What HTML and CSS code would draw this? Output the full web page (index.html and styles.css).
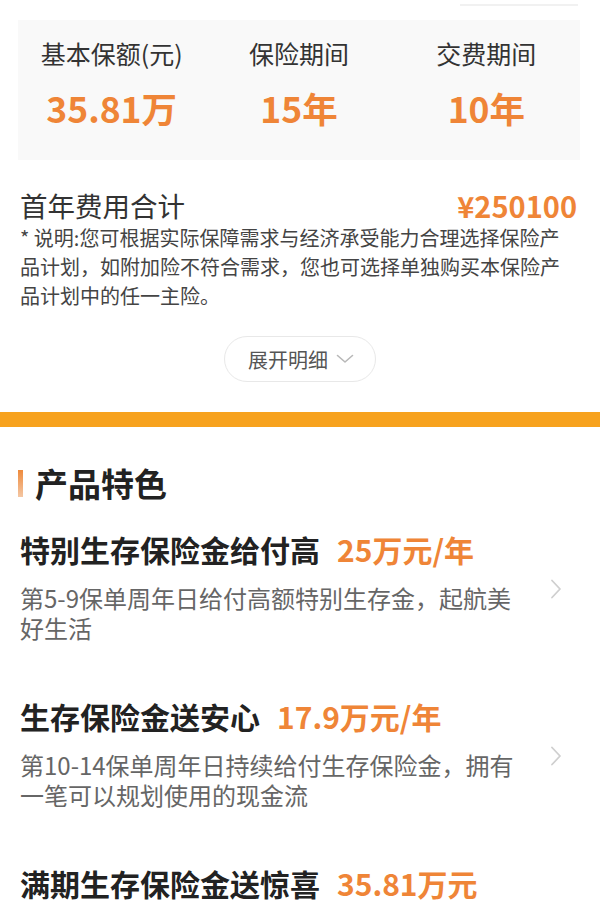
FILE: index.html
```html
<!DOCTYPE html>
<html lang="zh-CN">
<head>
<meta charset="utf-8">
<title>产品详情</title>
<link rel="stylesheet" href="styles.css">
</head>
<body>
<div class="page">
  <div class="top-line"></div>
  <div class="summary">
    <div class="cell">
      <div class="label">基本保额(元)</div>
      <div class="value">35.81万</div>
    </div>
    <div class="cell">
      <div class="label">保险期间</div>
      <div class="value">15年</div>
    </div>
    <div class="cell">
      <div class="label">交费期间</div>
      <div class="value">10年</div>
    </div>
  </div>

  <div class="fee-row">
    <span class="fee-title">首年费用合计</span>
    <span class="fee-amount">¥250100</span>
  </div>
  <p class="note">* 说明:您可根据实际保障需求与经济承受能力合理选择保险产品计划，如附加险不符合需求，您也可选择单独购买本保险产品计划中的任一主险。</p>

  <div class="expand-wrap">
    <div class="expand-btn">
      <span>展开明细</span>
      <svg class="expand-icon" width="18" height="10" viewBox="0 0 18 10"><path d="M1.5 1.5 L9 8 L16.5 1.5" fill="none" stroke="#b8b8b8" stroke-width="1.6" stroke-linecap="round" stroke-linejoin="round"/></svg>
    </div>
  </div>

  <div class="divider"></div>

  <section class="features">
    <h2 class="section-title"><span class="accent"></span>产品特色</h2>

    <div class="item">
      <div class="item-title">特别生存保险金给付高<span class="hl">25万元/年</span></div>
      <div class="item-body">
        <p class="item-desc">第5-9保单周年日给付高额特别生存金，起航美好生活</p>
        <svg class="chev" width="12" height="20" viewBox="0 0 12 20"><path d="M2 1.5 L10 10 L2 18.5" fill="none" stroke="#cfcfcf" stroke-width="1.8" stroke-linecap="round" stroke-linejoin="round"/></svg>
      </div>
    </div>

    <div class="item">
      <div class="item-title">生存保险金送安心<span class="hl">17.9万元/年</span></div>
      <div class="item-body">
        <p class="item-desc">第10-14保单周年日持续给付生存保险金，拥有一笔可以规划使用的现金流</p>
        <svg class="chev" width="12" height="20" viewBox="0 0 12 20"><path d="M2 1.5 L10 10 L2 18.5" fill="none" stroke="#cfcfcf" stroke-width="1.8" stroke-linecap="round" stroke-linejoin="round"/></svg>
      </div>
    </div>

    <div class="item">
      <div class="item-title">满期生存保险金送惊喜<span class="hl">35.81万元</span></div>
    </div>
  </section>
</div>
</body>
</html>
```

FILE: styles.css
```css
* { box-sizing: border-box; }
html, body { margin: 0; padding: 0; background: #fff; }
body {
  font-family: "Noto Sans CJK SC", "Noto Sans", sans-serif;
  color: #333;
  width: 600px;
  overflow: hidden;
}
.page { width: 600px; }

.top-line {
  height: 2px;
  margin: 4px 22px 0 460px;
  background: #f1f1f1;
}

.summary {
  margin: 14px 20px 0 18px;
  background: #f9f9f9;
  display: grid;
  grid-template-columns: 1fr 1fr 1fr;
  padding: 16px 0 31px;
}
.cell { text-align: center; }
.label {
  font-size: 25px;
  line-height: 35px;
  color: #333;
}
.value {
  margin-top: 16px;
  font-size: 35.5px;
  line-height: 42px;
  font-weight: 700;
  color: #ef8537;
}

.fee-row {
  margin: 27px 23px 0 20px;
  display: flex;
  justify-content: space-between;
  align-items: center;
  height: 36px;
}
.fee-title {
  font-size: 27.5px;
  line-height: 36px;
  color: #333;
}
.fee-amount {
  font-size: 29px;
  line-height: 36px;
  font-weight: 700;
  color: #ef8537;
}
.note {
  margin: 0;
  padding-left: 20px;
  width: 572px;
  font-size: 20px;
  line-height: 29px;
  color: #444;
}

.expand-wrap {
  display: flex;
  justify-content: center;
  margin-top: 26px;
}
.expand-btn {
  height: 46px;
  width: 152px;
  border: 1px solid #e8e8e8;
  border-radius: 23px;
  display: flex;
  align-items: center;
  justify-content: center;
  gap: 8px;
  font-size: 20px;
  color: #555;
  padding-left: 2px;
}

.divider {
  margin-top: 30px;
  height: 15px;
  background: #f7a21e;
}

.features { padding: 0 20px; }
.section-title {
  margin: 36px 0 0;
  display: flex;
  align-items: center;
  font-size: 33px;
  line-height: 40px;
  font-weight: 700;
  color: #222;
}
.accent {
  width: 5px;
  height: 27px;
  margin-left: -2px;
  margin-right: 12px;
  background: linear-gradient(#ee8a3c, #f4c7a4);
}

.item { margin-top: 26px; }
.item + .item { margin-top: 53px; }
.item-title {
  font-size: 30px;
  line-height: 40px;
  font-weight: 700;
  color: #222;
  white-space: nowrap;
}
.hl {
  margin-left: 17px;
  color: #ef8537;
}
.item-body {
  margin-top: 14px;
  display: flex;
  justify-content: space-between;
  align-items: flex-start;
}
.item-desc {
  margin: 0;
  width: 500px;
  font-size: 24px;
  line-height: 30px;
  color: #666;
}
.chev {
  margin-top: -4px;
  margin-right: 18px;
}
```
